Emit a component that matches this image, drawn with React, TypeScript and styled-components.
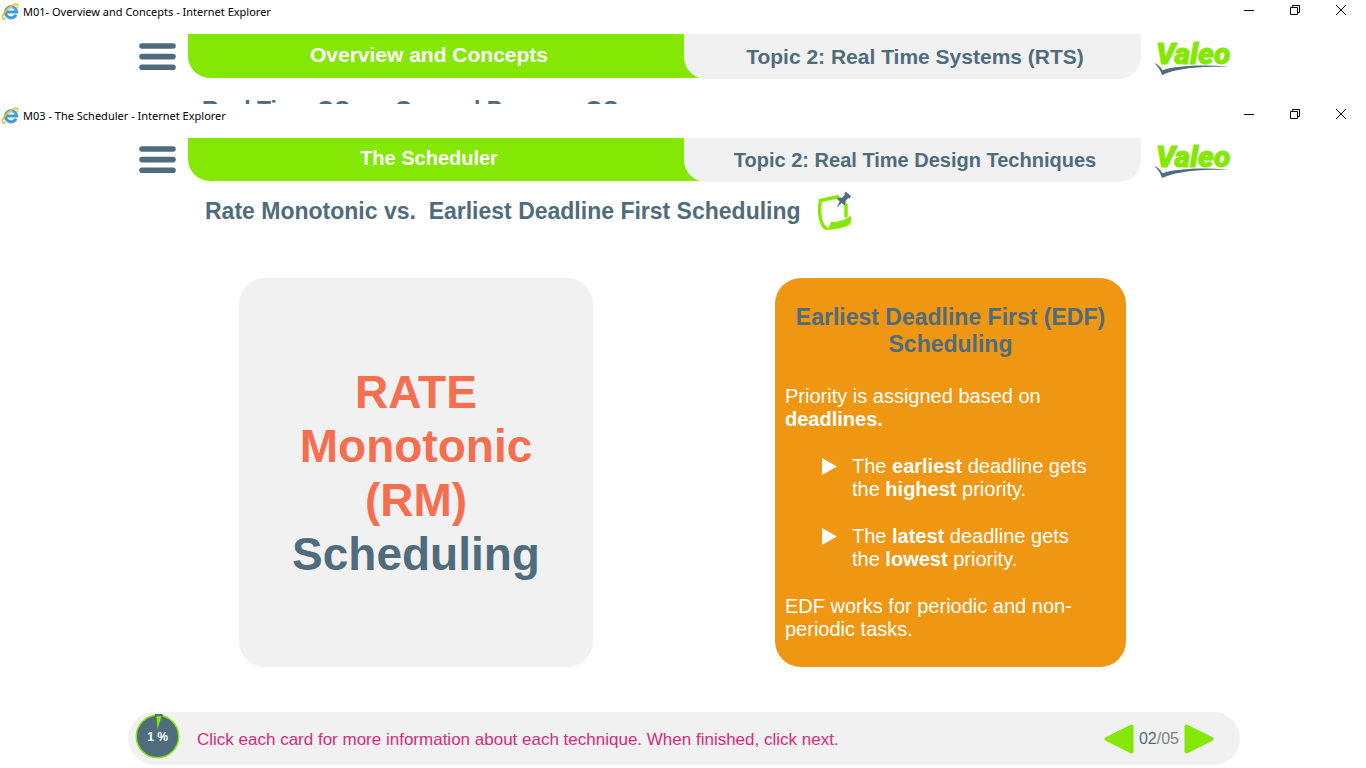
import React from "react";
import styled, { createGlobalStyle } from "styled-components";

const color = {
  green: "#84e804",
  slate: "#4f6c7c",
  panel: "#f1f1f1",
  orange: "#ef9613",
  coral: "#f46e50",
  magenta: "#d82a7c",
};

const GlobalStyle = createGlobalStyle`
  * { box-sizing: border-box; }
  body { margin: 0; background: #fff; font-family: "Liberation Sans", Arial, sans-serif; }
  h1, h2, h3, p, ul { margin: 0; padding: 0; }
  button { border: 0; padding: 0; background: none; font: inherit; color: inherit; cursor: pointer; }
  svg { display: block; }
`;

const Desktop = styled.div`
  display: flex;
  flex-direction: column;
  min-height: 100vh;
`;

const BrowserWindow = styled.section<{ $covered?: boolean }>`
  display: flex;
  flex-direction: column;
  background: #fff;
  ${(p) => (p.$covered ? "height: 104px; overflow: hidden; flex: none;" : "flex: 1;")}
`;

const TitleBar = styled.header`
  display: flex;
  align-items: center;
  flex: none;
  height: 24px;
  padding-left: 2px;
`;

const WindowTitle = styled.span`
  flex: 1;
  margin-left: 4px;
  font: 11px/16px "Noto Sans", "Open Sans", sans-serif;
  color: #000;
`;

const WindowButtons = styled.div`
  display: flex;
  align-self: flex-start;
  padding-right: 2px;
`;

const WindowButton = styled.button`
  display: flex;
  align-items: center;
  justify-content: center;
  width: 46px;
  height: 20px;
`;

const Stage = styled.div`
  display: flex;
  flex-direction: column;
  flex: 1;
  width: 100%;
  max-width: 1114px;
  margin: 10px auto 0;
  padding: 0 0 3px 2px;
`;

const CourseBar = styled.div<{ $large?: boolean }>`
  display: flex;
  flex: none;
  height: ${(p) => (p.$large ? 45 : 44)}px;
  padding-left: 11px;
`;

const MenuButton = styled.button`
  display: flex;
  align-items: center;
  flex: none;
  width: 37px;
  margin: 0 12px 1px 0;
`;

const Tabs = styled.div<{ $large?: boolean }>`
  display: grid;
  grid-template-columns: 496fr 457fr;
  flex: 1;
  font-size: ${(p) => (p.$large ? 21 : 20)}px;
  line-height: ${(p) => (p.$large ? 24 : 22)}px;
  text-align: center;
`;

const ModuleTab = styled.h1`
  margin: 0 -24px 1px 0;
  padding: 9px 38px 0 0;
  border-bottom-left-radius: 22px;
  background: ${color.green};
  color: #fff;
  font-size: inherit;
`;

const TopicTab = styled.h2`
  z-index: 1;
  padding: 11px 0 0 5px;
  border-radius: 0 0 22px 22px;
  background: ${color.panel};
  color: ${color.slate};
  font-size: inherit;
`;

const Logo = styled.svg`
  flex: none;
  align-self: center;
  width: 78px;
  height: 36px;
  margin: 2px 8px 0 13px;
  overflow: visible;
`;

const LessonTitle = styled.h2<{ $large?: boolean }>`
  display: flex;
  align-items: center;
  gap: 17px;
  flex: none;
  margin: ${(p) => (p.$large ? "10px 0 0 74px" : "8px 0 0 77px")};
  height: 42px;
  color: ${color.slate};
  font-size: 23px;
  line-height: 26px;
  white-space: pre;
`;

const CardRow = styled.main`
  display: grid;
  grid-template-columns: 354fr 351fr;
  column-gap: 182px;
  margin: 46px 114px 45px 111px;
  flex: 1;
`;

const FrontCard = styled.button`
  display: flex;
  flex-direction: column;
  align-items: center;
  justify-content: center;
  border-radius: 26px;
  background: ${color.panel};
  font-size: 46px;
  font-weight: bold;
  line-height: 54px;
`;

const FrontLine = styled.span<{ $muted?: boolean }>`
  color: ${(p) => (p.$muted ? color.slate : color.coral)};
`;

const BackCard = styled.article`
  padding: 26px 10px 24px;
  border-radius: 26px;
  background: ${color.orange};
  color: #fff;
  font-size: 20px;
  line-height: 23px;
`;

const CardHeading = styled.h3`
  margin-bottom: 27px;
  color: ${color.slate};
  font-size: 23px;
  line-height: 27px;
  text-align: center;
`;

const RuleList = styled.ul`
  display: flex;
  flex-direction: column;
  gap: 24px;
  margin: 24px 0;
  padding-left: 37px;
  list-style: none;
`;

const Rule = styled.li`
  display: flex;
  gap: 14px;
  svg { flex: none; margin-top: 3px; }
`;

const FooterBar = styled.footer`
  display: flex;
  align-items: center;
  flex: none;
  height: 53px;
  padding: 0 26px 0 7px;
  border-radius: 27px;
  background: ${color.panel};
`;

const Dial = styled.svg`
  flex: none;
  align-self: flex-start;
  width: 45px;
  height: 46px;
  margin-top: 1px;
`;

const Hint = styled.p`
  flex: 1;
  margin-left: 17px;
  padding-top: 2px;
  color: ${color.magenta};
  font-size: 17px;
  line-height: 20px;
`;

const Pager = styled.nav`
  display: flex;
  align-items: center;
  gap: 5px;
  color: #7f7f7f;
  font-size: 16px;
`;

const Current = styled.span`
  color: ${color.slate};
`;

const BrowserIcon = () => (
  <svg width="17" height="18" viewBox="0 0 17 18" aria-hidden="true">
    <path d="M14 11.8A5.6 5.600 0 1 1 14.600 9H5" fill="none" stroke="#3a9fdc" strokeWidth="3" />
    <path d="M4.400 6.600a4.800 4.800 0 0 1 8.600 0" fill="none" stroke="#8fd3f5" strokeWidth="1" />
    <path
      d="M3.400 15.400C1.400 17.200-.4 15.800 1 12.400 2.600 8.400 7.400 3.400 12 1.600c3-1.200 4.400.2 3.200 3"
      fill="none"
      stroke="#f5bd25"
      strokeWidth="1.6"
    />
  </svg>
);

const MinimizeIcon = () => (
  <svg width="10" height="10" viewBox="0 0 10 10" aria-hidden="true">
    <path d="M0 5.5h10" stroke="#000" />
  </svg>
);

const RestoreIcon = () => (
  <svg width="10" height="10" viewBox="0 0 10 10" aria-hidden="true">
    <path d="M.5 2.5h7v7h-7zM2.5 2.5v-2h7v7h-2" fill="none" stroke="#000" />
  </svg>
);

const CloseIcon = () => (
  <svg width="10" height="10" viewBox="0 0 10 10" aria-hidden="true">
    <path d="M0 0l10 10M10 0L0 10" stroke="#000" />
  </svg>
);

const MenuIcon = () => (
  <svg width="37" height="29" viewBox="0 0 37 29" aria-hidden="true">
    <path d="M3 4h31M3 14.6h31M3 25.3h31" stroke={color.slate} strokeWidth="5.6" strokeLinecap="round" />
  </svg>
);

const BrandLogo = () => (
  <Logo viewBox="0 0 78 36" role="img" aria-label="Valeo">
    <text
      x="2"
      y="24"
      fill={color.green}
      stroke={color.green}
      strokeWidth="1"
      fontFamily="Roboto, sans-serif"
      fontWeight="900"
      fontStyle="italic"
      fontSize="30"
    >
      Valeo
    </text>
    <path
      d="M0 23c3.5 1 6 3 8.5 7.3C23 25.5 50 24.5 75 26.8 50 26.5 24 27.5 8 35 6.5 30 4 26 0 23z"
      fill={color.slate}
    />
  </Logo>
);

const PinnedNoteIcon = () => (
  <svg width="34" height="40" viewBox="0 0 34 40" aria-hidden="true">
    <path
      d="M21 5.5L2.500 9.500C1 18 1.500 28 5 34.500q2 3 4.500 3M28 12.500v14"
      fill="none"
      stroke={color.green}
      strokeWidth="3.4"
    />
    <path
      d="M12.500 31C20 31.500 28 29 32.500 24.500c1 3 .5 7-.5 9-7 4-16 4.500-24.500 5.500 3-1.500 4.500-4 5-8z"
      fill={color.green}
    />
    <path
      d="M27.500.5l5.500 4.500-1.500 2.500-1.500-.3-2.500 3c.4 1.500 0 3.300-.8 4.300l-3-2.500-5 4.500 3-6-3-3c1.500-1.200 3.600-1.200 5-.5l3-3-.2-1.500z"
      fill={color.slate}
    />
  </svg>
);

const Bullet = () => (
  <svg width="16" height="18" viewBox="0 0 16 18" aria-hidden="true">
    <path d="M0 0l15 8.5L0 17z" fill="#fff" />
  </svg>
);

const ProgressDial = () => (
  <Dial viewBox="0 0 45 46" role="img" aria-label="1 % complete">
    <circle cx="22.5" cy="23.5" r="21.2" fill={color.slate} stroke={color.green} strokeWidth="1.5" />
    <path d="M19.5 3.5l.5-2.5h7.500l.5 2.500z" fill={color.slate} />
    <path d="M21.5 3l5 .3-4 13z" fill={color.green} />
    <text x="22.5" y="28" fill="#fff" fontSize="12" fontWeight="bold" textAnchor="middle">
      1 %
    </text>
  </Dial>
);

const PagerArrow = ({ back }: { back?: boolean }) => (
  <svg width="30" height="30" viewBox="0 0 30 30" aria-hidden="true">
    <path
      d={back ? "M2.5 15L27.5 2.5v25z" : "M27.5 15L2.5 2.5v25z"}
      fill={color.green}
      stroke={color.green}
      strokeWidth="4"
      strokeLinejoin="round"
    />
  </svg>
);

type WindowFrameProps = {
  title: string;
  module: string;
  topic: string;
  covered?: boolean;
  children: React.ReactNode;
};

const WindowFrame = ({ title, module, topic, covered, children }: WindowFrameProps) => (
  <BrowserWindow $covered={covered} aria-label={title}>
    <TitleBar>
      <BrowserIcon />
      <WindowTitle>{title}</WindowTitle>
      <WindowButtons>
        <WindowButton aria-label="Minimize"><MinimizeIcon /></WindowButton>
        <WindowButton aria-label="Restore"><RestoreIcon /></WindowButton>
        <WindowButton aria-label="Close"><CloseIcon /></WindowButton>
      </WindowButtons>
    </TitleBar>
    <Stage>
      <CourseBar $large={covered}>
        <MenuButton aria-label="Menu"><MenuIcon /></MenuButton>
        <Tabs $large={covered}>
          <ModuleTab>{module}</ModuleTab>
          <TopicTab>{topic}</TopicTab>
        </Tabs>
        <BrandLogo />
      </CourseBar>
      {children}
    </Stage>
  </BrowserWindow>
);

export default function App() {
  return (
    <Desktop>
      <GlobalStyle />
      <WindowFrame
        covered
        title="M01- Overview and Concepts - Internet Explorer"
        module="Overview and Concepts"
        topic="Topic 2: Real Time Systems (RTS)"
      >
        <LessonTitle $large>Real Time OS vs. General Purpose OS</LessonTitle>
      </WindowFrame>
      <WindowFrame
        title="M03 - The Scheduler - Internet Explorer"
        module="The Scheduler"
        topic="Topic 2: Real Time Design Techniques"
      >
        <LessonTitle>
          {"Rate Monotonic vs.  Earliest Deadline First Scheduling"}
          <PinnedNoteIcon />
        </LessonTitle>
        <CardRow>
          <FrontCard>
            <FrontLine>RATE</FrontLine>
            <FrontLine>Monotonic</FrontLine>
            <FrontLine>(RM)</FrontLine>
            <FrontLine $muted>Scheduling</FrontLine>
          </FrontCard>
          <BackCard>
            <CardHeading>Earliest Deadline First (EDF) Scheduling</CardHeading>
            <p>
              Priority is assigned based on <br />
              <strong>deadlines.</strong>
            </p>
            <RuleList>
              <Rule>
                <Bullet />
                <span>The <strong>earliest</strong> deadline gets<br />the <strong>highest</strong> priority.</span>
              </Rule>
              <Rule>
                <Bullet />
                <span>The <strong>latest</strong> deadline gets<br />the <strong>lowest</strong> priority.</span>
              </Rule>
            </RuleList>
            <p>EDF works for periodic and non-<br />periodic tasks.</p>
          </BackCard>
        </CardRow>
        <FooterBar>
          <ProgressDial />
          <Hint>Click each card for more information about each technique. When finished, click next.</Hint>
          <Pager aria-label="Slides">
            <button aria-label="Previous"><PagerArrow back /></button>
            <span><Current>02</Current>/05</span>
            <button aria-label="Next"><PagerArrow /></button>
          </Pager>
        </FooterBar>
      </WindowFrame>
    </Desktop>
  );
}
